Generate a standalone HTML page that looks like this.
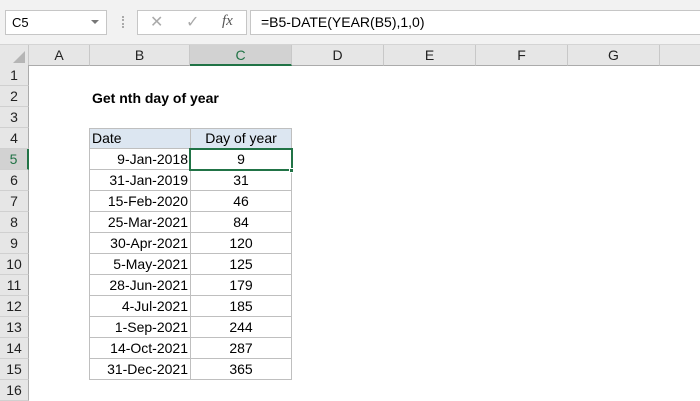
<!DOCTYPE html>
<html><head><style>
*{margin:0;padding:0;box-sizing:border-box}
body{width:700px;height:400px;overflow:hidden;background:#fff;font-family:"Liberation Sans",sans-serif;position:relative}
.abs{position:absolute}
.tb{left:0;top:0;width:700px;height:45px;background:#f2f2f2;border-bottom:1px solid #d4d4d4}
.box{background:#fff;border:1px solid #c6c6c6}
.ch{top:45px;height:21px;background:#e6e6e6;border-bottom:1px solid #ababab;border-right:1px solid #c8c8c8;font-size:14px;color:#222;text-align:center;line-height:21px}
.rh{left:0;width:29px;height:21px;background:#e6e6e6;border-right:1px solid #ababab;border-bottom:1px solid #d0d0d0;font-size:14px;color:#222;text-align:center;line-height:21px}
.t{position:absolute;left:89px;width:203px;top:128px;border-top:1px solid #bfbfbf;border-left:1px solid #bfbfbf}
.r{display:flex;height:21px}
.r div{height:21px;font-size:14px;line-height:20px;border-right:1px solid #bfbfbf;border-bottom:1px solid #bfbfbf}
.a{width:101px;text-align:right;padding-right:2px}
.b{width:101px;text-align:center}
</style></head><body>
<div class="abs tb"></div>
<div class="abs box" style="left:5px;top:10px;width:102px;height:25px;font-size:13px;line-height:23px;padding-left:6px">C5</div>
<div class="abs" style="left:91px;top:20px;width:0;height:0;border-left:4px solid transparent;border-right:4px solid transparent;border-top:4px solid #777"></div>
<div class="abs" style="left:122px;top:16px;width:2px;height:12px;border-left:2px dotted #aaa"></div>
<div class="abs box" style="left:137px;top:10px;width:110px;height:25px"></div>
<div class="abs" style="left:150px;top:12px;font-size:16px;color:#aaa">✕</div>
<div class="abs" style="left:186px;top:12px;font-size:16px;color:#aaa">✓</div>
<div class="abs" style="left:222px;top:13px;font-size:15px;color:#555;font-style:italic;font-family:'Liberation Serif',serif">fx</div>
<div class="abs box" style="left:250px;top:10px;width:460px;height:25px;font-size:14px;line-height:23px;padding-left:10px">=B5-DATE(YEAR(B5),1,0)</div>
<div class="abs ch" style="left:0;width:29px"></div>
<div class="abs" style="left:13px;top:51px;width:0;height:0;border-left:12px solid transparent;border-bottom:12px solid #b5b5b5"></div>
<div class="abs ch" style="left:29px;width:61px">A</div>
<div class="abs ch" style="left:90px;width:100px">B</div>
<div class="abs ch" style="left:190px;width:102px;background:#d2d2d2;border-bottom:2px solid #217346;color:#217346">C</div>
<div class="abs ch" style="left:292px;width:92px">D</div>
<div class="abs ch" style="left:384px;width:92px">E</div>
<div class="abs ch" style="left:476px;width:92px">F</div>
<div class="abs ch" style="left:568px;width:92px">G</div>
<div class="abs ch" style="left:660px;width:40px;border-right:none"></div>
<div class="abs rh" style="top:65px">1</div>
<div class="abs rh" style="top:86px">2</div>
<div class="abs rh" style="top:107px">3</div>
<div class="abs rh" style="top:128px">4</div>
<div class="abs rh" style="top:149px;background:#d2d2d2;color:#217346;border-right:2px solid #217346">5</div>
<div class="abs rh" style="top:170px">6</div>
<div class="abs rh" style="top:191px">7</div>
<div class="abs rh" style="top:212px">8</div>
<div class="abs rh" style="top:233px">9</div>
<div class="abs rh" style="top:254px">10</div>
<div class="abs rh" style="top:275px">11</div>
<div class="abs rh" style="top:296px">12</div>
<div class="abs rh" style="top:317px">13</div>
<div class="abs rh" style="top:338px">14</div>
<div class="abs rh" style="top:359px">15</div>
<div class="abs rh" style="top:380px">16</div>
<div class="abs" style="left:92px;top:90px;font-size:14px;font-weight:bold">Get nth day of year</div>
<div class="t">
<div class="r" style="background:#dce6f1;height:20px"><div style="width:101px;padding-left:2px;height:20px;line-height:19px">Date</div><div class="b" style="height:20px;line-height:19px">Day of year</div></div>
<div class="r"><div class="a">9-Jan-2018</div><div class="b">9</div></div>
<div class="r"><div class="a">31-Jan-2019</div><div class="b">31</div></div>
<div class="r"><div class="a">15-Feb-2020</div><div class="b">46</div></div>
<div class="r"><div class="a">25-Mar-2021</div><div class="b">84</div></div>
<div class="r"><div class="a">30-Apr-2021</div><div class="b">120</div></div>
<div class="r"><div class="a">5-May-2021</div><div class="b">125</div></div>
<div class="r"><div class="a">28-Jun-2021</div><div class="b">179</div></div>
<div class="r"><div class="a">4-Jul-2021</div><div class="b">185</div></div>
<div class="r"><div class="a">1-Sep-2021</div><div class="b">244</div></div>
<div class="r"><div class="a">14-Oct-2021</div><div class="b">287</div></div>
<div class="r"><div class="a">31-Dec-2021</div><div class="b">365</div></div>
</div>
<div class="abs" style="left:189px;top:148px;width:104px;height:23px;border:2px solid #217346"></div>
<div class="abs" style="left:289px;top:168px;width:5px;height:5px;background:#217346;border:1px solid #fff"></div>
</body></html>
